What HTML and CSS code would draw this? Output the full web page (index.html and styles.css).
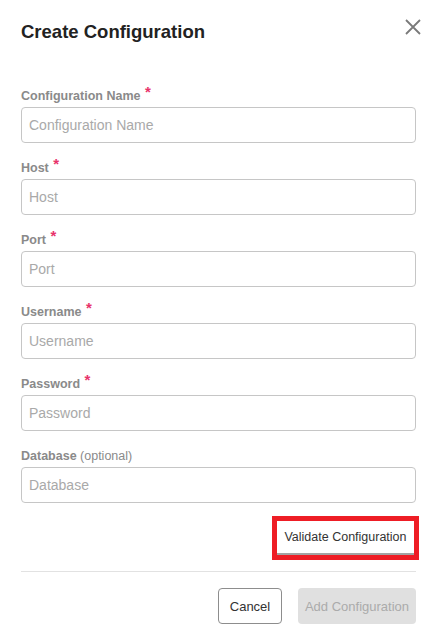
FILE: index.html
```html
<!DOCTYPE html>
<html lang="en">
<head>
    <meta charset="UTF-8">
    <meta name="viewport" content="width=device-width, initial-scale=1.0">
    <title>Create Configuration</title>
    <link rel="stylesheet" href="styles.css">
</head>
<body>
    <div class="dialog">
        <div class="dialog-header">
            <h2>Create Configuration</h2>
            <button class="close-btn" aria-label="Close">
                <svg width="16" height="16" viewBox="0 0 16 16">
                    <path d="M1 1 L15 15 M15 1 L1 15" stroke="#7a7a7a" stroke-width="1.8" fill="none"/>
                </svg>
            </button>
        </div>

        <form class="config-form">
            <div class="field">
                <label>Configuration Name <span class="req">*</span></label>
                <input type="text" placeholder="Configuration Name">
            </div>
            <div class="field">
                <label>Host <span class="req">*</span></label>
                <input type="text" placeholder="Host">
            </div>
            <div class="field">
                <label>Port <span class="req">*</span></label>
                <input type="text" placeholder="Port">
            </div>
            <div class="field">
                <label>Username <span class="req">*</span></label>
                <input type="text" placeholder="Username">
            </div>
            <div class="field">
                <label>Password <span class="req">*</span></label>
                <input type="password" placeholder="Password">
            </div>
            <div class="field last">
                <label>Database <span class="optional">(optional)</span></label>
                <input type="text" placeholder="Database">
            </div>

            <div class="validate-row">
                <div class="highlight">
                    <button type="button" class="validate-btn">Validate Configuration</button>
                </div>
            </div>
        </form>

        <div class="dialog-footer">
            <button type="button" class="cancel-btn">Cancel</button>
            <button type="button" class="add-btn" disabled>Add Configuration</button>
        </div>
    </div>
</body>
</html>
```

FILE: styles.css
```css
body {
    font-family: "Liberation Sans", Arial, sans-serif;
    background: white;
    margin: 0;
}

.dialog {
    padding: 20px 21px 0 21px;
}

.dialog-header {
    display: flex;
    justify-content: space-between;
    align-items: flex-start;
    height: 68px;
}

h2 {
    margin: 0;
    font-size: 18.5px;
    line-height: 24px;
    font-weight: 700;
    color: #222;
}

.close-btn {
    background: none;
    border: none;
    padding: 0;
    margin: -1px -5px 0 0;
    cursor: pointer;
    line-height: 0;
}

.field {
    margin-bottom: 17px;
}

.field.last {
    margin-bottom: 0;
}

.field label {
    display: block;
    font-size: 12.5px;
    line-height: 16px;
    font-weight: 700;
    color: #8a8a8a;
    margin-bottom: 3px;
}

.req {
    color: #e8336b;
    font-size: 15px;
    line-height: 0;
    position: relative;
    top: -3px;
    margin-left: 1px;
}

.optional {
    font-weight: 400;
}

input {
    display: block;
    box-sizing: border-box;
    width: 100%;
    height: 36px;
    padding: 0 7px;
    border: 1px solid #c6c6c6;
    border-radius: 4px;
    font-family: inherit;
    font-size: 14px;
    color: #333;
}

input::placeholder {
    color: #a9a9a9;
}

.validate-row {
    display: flex;
    justify-content: flex-end;
    margin: 13px -3px 0 0;
}

.highlight {
    border: 5px solid #ee1d25;
}

.validate-btn {
    display: block;
    width: 137px;
    height: 34px;
    background: white;
    border: none;
    border-bottom: 2px solid #a3a3a3;
    padding: 0;
    font-family: inherit;
    font-size: 12.5px;
    color: #333;
    cursor: pointer;
}

.dialog-footer {
    display: flex;
    justify-content: flex-end;
    gap: 16px;
    margin-top: 11px;
    padding-top: 16px;
    border-top: 1px solid #e2e2e2;
}

.dialog-footer button {
    height: 36px;
    border-radius: 4px;
    font-family: inherit;
    font-size: 13px;
    cursor: pointer;
}

.cancel-btn {
    width: 64px;
    background: white;
    border: 1px solid #8d8d8d;
    color: #333;
}

.add-btn {
    width: 118px;
    background: #e0e0e0;
    border: none;
    color: #ababab;
    cursor: default;
}
```
